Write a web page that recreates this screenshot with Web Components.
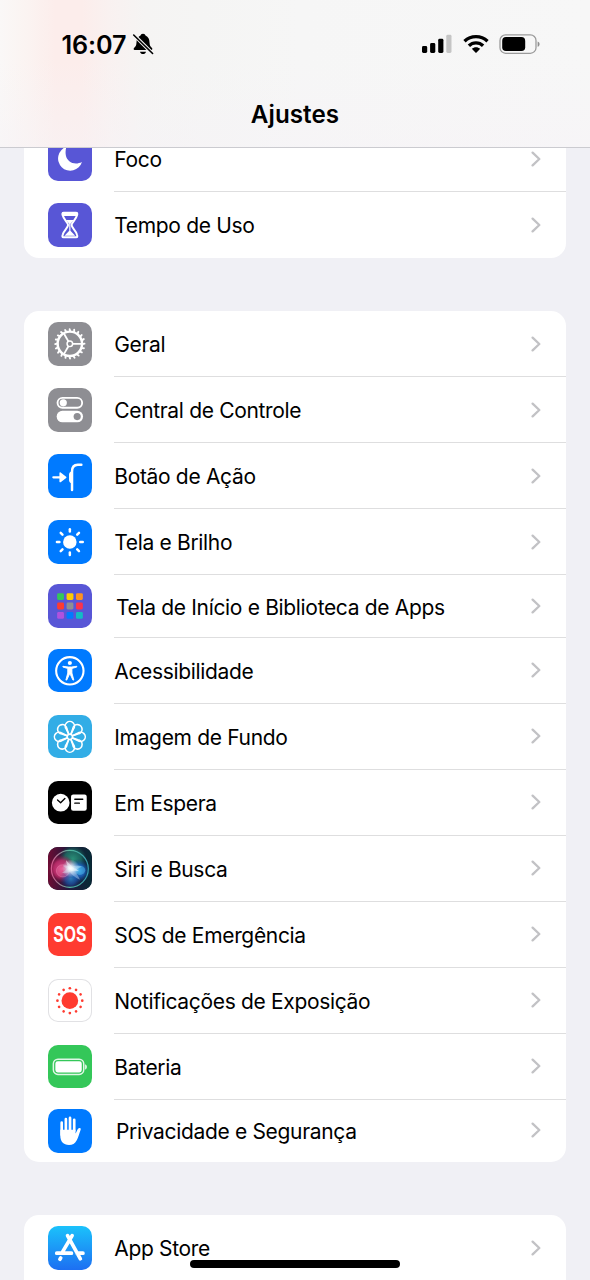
<!DOCTYPE html>
<html lang="pt-BR">
<head>
<meta charset="utf-8">
<title>Ajustes</title>
<style>
  body {
    margin: 0;
    font-family: Inter, "Liberation Sans", sans-serif;
    color: #000;
    -webkit-font-smoothing: antialiased;
  }
</style>
</head>
<body>
<settings-app>
  <status-bar slot="header" time="16:07"></status-bar>
  <nav-title slot="header">Ajustes</nav-title>

  <settings-group>
    <settings-row icon="moon" color="#5856d6">Foco</settings-row>
    <settings-row icon="hourglass" color="#5856d6">Tempo de Uso</settings-row>
  </settings-group>

  <settings-group>
    <settings-row icon="gear" color="#8e8e93">Geral</settings-row>
    <settings-row icon="switches" color="#8e8e93">Central de Controle</settings-row>
    <settings-row icon="action" color="#007aff">Botão de Ação</settings-row>
    <settings-row icon="sun" color="#007aff">Tela e Brilho</settings-row>
    <settings-row icon="grid" color="#5856d6" compact>Tela de Início e Biblioteca de Apps</settings-row>
    <settings-row icon="person" color="#007aff">Acessibilidade</settings-row>
    <settings-row icon="flower" color="#32ade6">Imagem de Fundo</settings-row>
    <settings-row icon="standby" color="#000">Em Espera</settings-row>
    <settings-row icon="siri" color="#131030">Siri e Busca</settings-row>
    <settings-row icon="sos" color="#ff3b30">SOS de Emergência</settings-row>
    <settings-row icon="exposure" color="#fff">Notificações de Exposição</settings-row>
    <settings-row icon="battery" color="#34c759">Bateria</settings-row>
    <settings-row icon="hand" color="#007aff" compact>Privacidade e Segurança</settings-row>
  </settings-group>

  <settings-group open-end>
    <settings-row icon="appstore" color="linear-gradient(#1bc2fb, #1d6ff2)">App Store</settings-row>
  </settings-group>
</settings-app>

<script>
// repeats a shape around the middle of the 44x44 tile
const around = (count, shape, cy = 22) =>
  Array.from({ length: count }, (_, i) => `<g transform="rotate(${(360 / count) * i} 22 ${cy})">${shape}</g>`).join("");

const icons = {
  moon: `<path fill="#fff" d="M18.6 9.9A12.3 12.3 0 1 0 34.2 25.2C26.5 29 19.3 25 18 18.6C17.4 15.4 17.7 12.4 18.6 9.9Z"/>`,
  hourglass: `
    <path fill="none" stroke="#fff" stroke-width="2" stroke-linejoin="round" d="M15.6 9.8H28.4C29.8 9.8 29.6 11.2 29.2 12.4C28.2 17 23.8 19.4 23.8 22.2C23.8 25 28.2 27.4 29.2 32C29.6 33.4 29.8 34.6 28.4 34.6H15.6C14.2 34.6 14.4 33.4 14.8 32C15.8 27.4 20.2 25 20.2 22.2C20.2 19.4 15.8 17 14.8 12.4C14.4 11.2 14.2 9.8 15.6 9.8Z"/>
    <path fill="#fff" d="M14.4 9H29.6V11.5L29 13H15L14.4 11.5ZM18 17.2H26L22.6 21V28L27.4 33H16.6L21.4 28V21Z"/>`,
  gear: `<g fill="none" stroke="#fff">
      <circle cx="22" cy="22" r="12.3" stroke-width="2.5"/>
      <circle cx="22" cy="22" r="2.8" stroke-width="1.5"/>
      ${around(3, `<path stroke-width="1.8" d="M24.8 22H34"/>`)}
      ${around(20, `<path stroke-width="1.9" stroke-linecap="round" d="M35 22.3L36.8 21.8"/>`)}
    </g>`,
  switches: `
    <rect x="9.6" y="10" width="24.8" height="9.9" rx="4.95" fill="none" stroke="#fff" stroke-width="1.9"/>
    <circle cx="15.4" cy="14.95" r="3.6" fill="#fff"/>
    <rect x="8.7" y="23" width="26.6" height="11.6" rx="5.8" fill="#fff"/>
    <circle cx="29.4" cy="28.8" r="3.6" fill="#8e8e93"/>`,
  action: `<g stroke="#fff" fill="none" stroke-linecap="round">
      <path stroke-width="2.3" d="M5.4 23.5H14"/>
      <path stroke-width="1.6" stroke-linejoin="round" fill="#fff" d="M12.3 19.3L17.8 23.5L12.3 27.7Z"/>
      <path stroke-width="2.5" d="M24.2 36.3V17.5C24.2 12.6 26.2 10.9 30 10.8H33.6"/>
    </g>
    <path fill="#fff" d="M23.5 17.6C21.8 18 21.2 19.2 21.2 21V26C21.2 27.8 21.8 29 23.5 29.4Z"/>`,
  sun: `<circle cx="22" cy="22.2" r="6.8" fill="#fff"/>
    ${around(8, `<path stroke="#fff" stroke-width="2.5" stroke-linecap="round" d="M22 9.2V11.7"/>`, 22.2)}`,
  grid: ["#34c759", "#ffcc00", "#ff9220", "#ff3b30", "#8e8e93", "#fb334d", "#af52de", "#007aff", "#12bdc4"]
    .map((c, i) => `<rect x="${9.2 + (i % 3) * 9.5}" y="${9.2 + Math.floor(i / 3) * 9.5}" width="6.9" height="6.9" rx="1.4" fill="${c}"/>`).join(""),
  person: `<circle cx="22" cy="22" r="13.8" fill="none" stroke="#fff" stroke-width="2.1"/>
    <circle cx="22" cy="14.1" r="2.1" fill="#fff"/>
    <path fill="#fff" stroke="#fff" stroke-width=".9" stroke-linejoin="round" d="M15 17.4L20.4 18.1H23.6L29 17.4V18.2L24.1 19.6V24.2L26 31.3H25.1L22.4 25.5H21.6L18.9 31.3H18L19.9 24.2V19.6L15 18.2Z"/>`,
  flower: around(8, `<path fill="none" stroke="#fff" stroke-width="1.6" d="M21.1 19.8L18.4 14.2A4.7 4.7 0 1 1 25.6 14.2L22.9 19.8"/>`)
    + `<circle cx="22" cy="22" r="2.6" fill="none" stroke="#fff" stroke-width="1.5"/>`,
  standby: `<circle cx="12.8" cy="21.8" r="8.9" fill="#fff"/>
    <path fill="none" stroke="#000" stroke-width="1.4" stroke-linecap="round" stroke-linejoin="round" d="M9.6 19.2L12.7 21.9L17 17.7"/>
    <rect x="23.2" y="13.6" width="15.8" height="16.4" rx="2.2" fill="#fff"/>
    <path stroke="#000" stroke-width="1.4" stroke-linecap="round" d="M27 18.4H35M27 22.3H31.6"/>`,
  siri: `<defs>
      <radialGradient id="pink"><stop offset="0" stop-color="#e2508f"/><stop offset=".6" stop-color="#c12c6c" stop-opacity=".85"/><stop offset="1" stop-color="#8a1740" stop-opacity="0"/></radialGradient>
      <radialGradient id="green"><stop offset="0" stop-color="#2a8f78"/><stop offset=".6" stop-color="#1d7466" stop-opacity=".8"/><stop offset="1" stop-color="#0b5a4b" stop-opacity="0"/></radialGradient>
      <radialGradient id="blue"><stop offset="0" stop-color="#2fa4e8"/><stop offset=".5" stop-color="#1a64c4" stop-opacity=".8"/><stop offset="1" stop-color="#123a80" stop-opacity="0"/></radialGradient>
      <radialGradient id="glow"><stop offset="0" stop-color="#fff"/><stop offset=".3" stop-color="#effcff" stop-opacity=".85"/><stop offset="1" stop-color="#c9e5ff" stop-opacity="0"/></radialGradient>
      <linearGradient id="base"><stop offset="0" stop-color="#6d0c33"/><stop offset=".45" stop-color="#23163c"/><stop offset="1" stop-color="#062b35"/></linearGradient>
      <linearGradient id="rim"><stop offset="0" stop-color="#d4588e"/><stop offset=".5" stop-color="#52b79c"/><stop offset="1" stop-color="#379db0"/></linearGradient>
    </defs>
    <rect width="44" height="44" fill="url(#base)"/>
    <circle cx="25" cy="12" r="14" fill="url(#green)"/>
    <circle cx="14" cy="22" r="14" fill="url(#pink)"/>
    <circle cx="31" cy="24" r="12" fill="url(#blue)"/>
    <circle cx="23" cy="32" r="11" fill="url(#blue)" opacity=".7"/>
    <circle cx="22" cy="22" r="18.6" fill="none" stroke="url(#rim)" stroke-width="1.2"/>
    <ellipse cx="15" cy="24" rx="6.6" ry="6.2" fill="#f77fb0" fill-opacity=".3" stroke="#f7a0c4" stroke-opacity=".4" stroke-width=".8"/>
    <ellipse cx="32" cy="23.5" rx="5.5" ry="4.6" fill="#58c4f2" opacity=".45"/>
    <path fill="#dff6ff" opacity=".35" d="M15 19Q20 18 23 21Q29 17 34 20Q30 22 26 24Q31 29 32 33Q25 30 22 25Q18 27 14 26Q18 24 19 22Z"/>
    <path fill="#fff" opacity=".5" d="M18 13Q22 17 25 21Q29 22 31 24Q27 25 23 24Q19 20 18 13Z"/>
    <circle cx="23" cy="21.5" r="9" fill="url(#glow)"/>`,
  sos: `<text transform="translate(22 29.7) scale(.745 1)" text-anchor="middle" fill="#fff" font-family="Inter" font-weight="700" font-size="21.6">SOS</text>`,
  exposure: `<circle cx="22" cy="21.8" r="8.4" fill="#ff3b30"/>
    ${around(12, `<circle cx="22" cy="9.3" r="1.35" fill="#ff3b30"/>`, 21.8)}`,
  battery: `<rect x="5.4" y="14.4" width="30.6" height="15.2" rx="4.6" fill="none" stroke="#fff" stroke-opacity=".85" stroke-width="1.5"/>
    <rect x="7.4" y="16.4" width="26.6" height="11.2" rx="2.4" fill="#fff"/>
    <path fill="#fff" fill-opacity=".85" d="M37.3 19.3C39.8 20 39.8 24 37.3 24.7Z"/>`,
  hand: `<path fill="none" stroke="#fff" stroke-width="2.7" stroke-linecap="round" d="M13.8 13.8V26M18 10.2V22M22.2 9V22M26.4 10.8V22"/>
    <path fill="#fff" d="M12.4 21H27.7V24.8C28.6 23.5 29.3 21.5 30.1 20.2C31.2 18.4 33.5 18.9 32.9 20.8C31.6 24.4 30.4 28.7 28.8 31.7C27.2 34.8 24.7 36.2 21.2 36.2C15.5 36.2 12.4 32.8 12.4 27Z"/>`,
  appstore: `<g fill="none" stroke="#fff" stroke-width="3.7" stroke-linecap="round">
      <path d="M24.3 9.7L14.8 25.8M19.7 9.7L32.6 33M8.8 27.4H23.6M29.3 27.4H35.2M12.8 32.2L12 33.5"/>
    </g>`
};

class SettingsApp extends HTMLElement {
  constructor() {
    super();
    this.attachShadow({ mode: "open" });
    this.shadowRoot.innerHTML = `
      <style>
        :host {
          display: flex;
          flex-direction: column;
          position: relative;
          height: 1280px;
          overflow: hidden;
          background: #f0f0f5;
        }
        header {
          flex: none;
          box-sizing: border-box;
          height: 148px;
          z-index: 1;
          border-bottom: 1px solid #cbcbd0;
          background:
            linear-gradient(rgba(246, 244, 246, 0) 40%, rgba(246, 243, 247, .5)),
            linear-gradient(90deg, #faf8f7, #fbf4f2 24px, #fcedeb 55px, #fcedeb 82px, #f9f1f0 108px, #f5f4f3 145px, #f5f5f4 200px, #f6f6f6 300px, #f7f7f7);
        }
        main {
          flex: none;
          display: flex;
          flex-direction: column;
          gap: 53px;
          padding: 0 24.4px;
          margin-top: -22px;
        }
        .home {
          position: absolute;
          left: 190px;
          bottom: 12px;
          width: 210px;
          height: 8px;
          border-radius: 4px;
          background: #000;
        }
      </style>
      <header><slot name="header"></slot></header>
      <main><slot></slot></main>
      <div class="home"></div>
    `;
  }
}

customElements.define("settings-app", SettingsApp);

class StatusBar extends HTMLElement {
  get time() {
    return this.getAttribute("time");
  }

  constructor() {
    super();
    this.attachShadow({ mode: "open" });
    this.shadowRoot.innerHTML = `
      <style>
        :host {
          display: flex;
          align-items: center;
          box-sizing: border-box;
          height: 88px;
          padding: 0 49px 0 61.5px;
        }
        .time {
          width: 70.5px;
          padding-top: 1px;
          font-size: 25.2px;
          font-weight: 600;
          letter-spacing: -.1px;
          white-space: nowrap;
        }
        .signal { margin-left: auto; }
        .wifi { margin: 0 10.5px; }
        svg { display: block; flex: none; }
      </style>
      <div class="time">${this.time}</div>
      <svg width="22" height="22" viewBox="0 0 22 22">
        <path d="M11 .8C12.6.8 13.2 1.8 13.5 2.6C16.4 3.8 17.4 6.4 17.5 9.3C17.6 12.8 18.6 13.8 20 15.1C20.7 15.9 20.4 17.1 19.3 17.1H2.7C1.6 17.1 1.3 15.9 2 15.1C3.4 13.8 4.4 12.8 4.5 9.3C4.6 6.4 5.6 3.8 8.5 2.6C8.8 1.8 9.4.8 11 .8ZM8 18.7H14C13.5 21.9 8.5 21.9 8 18.7Z"/>
        <path stroke="#f6f5f5" stroke-width="3.6" d="M0 0L22 22"/>
        <path stroke="#000" stroke-width="1.6" stroke-linecap="round" d="M1.7 2L20.6 20.5"/>
      </svg>
      <svg class="signal" width="30" height="20" viewBox="0 0 30 20">
        <rect y="12" width="5.2" height="7" rx="1.4"/>
        <rect x="8.1" y="9" width="5.2" height="10" rx="1.4"/>
        <rect x="16.2" y="4.8" width="5.2" height="14.2" rx="1.4"/>
        <rect x="24.3" y=".8" width="5.2" height="18.2" rx="1.4" fill="#c5c5c5"/>
      </svg>
      <svg class="wifi" width="26" height="20" viewBox="0 0 26 20">
        <g fill="none" stroke="#000" stroke-width="3.3">
          <path d="M1.5 7.3C8 1.1 18 1.1 24.5 7.3"/>
          <path d="M5.9 11.8C9.9 7.9 16.1 7.9 20.1 11.8"/>
        </g>
        <path d="M8.8 14.8C11.2 12.7 14.8 12.7 17.2 14.8L13.6 18.5Q13 19 12.4 18.5Z"/>
      </svg>
      <svg width="42" height="20" viewBox="0 0 42 20">
        <rect x="1" y=".9" width="36" height="18.4" rx="5.6" fill="none" stroke="#9b9b9b" stroke-width="1.3"/>
        <rect x="3.2" y="3.1" width="23" height="14" rx="3.8"/>
        <path fill="#8f8f8f" d="M38.6 7.4C41.2 8.3 41.2 11.9 38.6 12.8Z"/>
      </svg>
    `;
  }
}

customElements.define("status-bar", StatusBar);

class NavTitle extends HTMLElement {
  constructor() {
    super();
    this.attachShadow({ mode: "open" });
    this.shadowRoot.innerHTML = `
      <style>
        :host {
          display: block;
          padding-top: 12px;
          text-align: center;
          font-size: 24.2px;
          line-height: 30px;
          font-weight: 600;
          letter-spacing: .05px;
        }
      </style>
      <slot></slot>
    `;
  }
}

customElements.define("nav-title", NavTitle);

class SettingsGroup extends HTMLElement {
  constructor() {
    super();
    this.attachShadow({ mode: "open" });
    this.shadowRoot.innerHTML = `
      <style>
        :host {
          display: block;
          overflow: hidden;
          border-radius: 15px;
          background: #fff;
        }
        /* the group goes on below the screen */
        :host([open-end]) { padding-bottom: 40px; }
        ::slotted(:last-child) { --line: transparent; }
      </style>
      <slot></slot>
    `;
  }
}

customElements.define("settings-group", SettingsGroup);

class SettingsRow extends HTMLElement {
  get icon() {
    return this.getAttribute("icon");
  }
  get color() {
    return this.getAttribute("color");
  }

  constructor() {
    super();
    this.attachShadow({ mode: "open" });
    this.shadowRoot.innerHTML = `
      <style>
        :host {
          display: flex;
          align-items: center;
          height: 66px;
          padding-left: 23.7px;
        }
        :host([compact]) { height: 62.5px; }
        .tile {
          flex: none;
          width: 43.7px;
          height: 43.7px;
          overflow: hidden;
          border-radius: 10px;
          background: ${this.color};
        }
        :host([icon="exposure"]) .tile { box-shadow: inset 0 0 0 1px #e1e1e4; }
        svg { display: block; }
        .body {
          flex: 1;
          display: flex;
          align-items: center;
          justify-content: space-between;
          box-sizing: border-box;
          height: 100%;
          margin-left: 22.2px;
          padding: 2.8px 24.5px 0 .3px;
          border-bottom: 1px solid var(--line, #dededf);
          font-size: 21px;
          letter-spacing: -.33px;
          white-space: nowrap;
        }
        :host([compact]) .body { padding-left: 2px; }
        .chevron { margin-top: -2.8px; }
      </style>
      <div class="tile"><svg width="100%" height="100%" viewBox="0 0 44 44">${icons[this.icon]}</svg></div>
      <div class="body">
        <div><slot></slot></div>
        <svg class="chevron" width="10" height="16" viewBox="0 0 10 16">
          <path fill="none" stroke="#c2c2c5" stroke-width="2.3" stroke-linecap="round" stroke-linejoin="round" d="M1.6 1.6L8.3 8L1.6 14.4"/>
        </svg>
      </div>
    `;
  }
}

customElements.define("settings-row", SettingsRow);
</script>
</body>
</html>
